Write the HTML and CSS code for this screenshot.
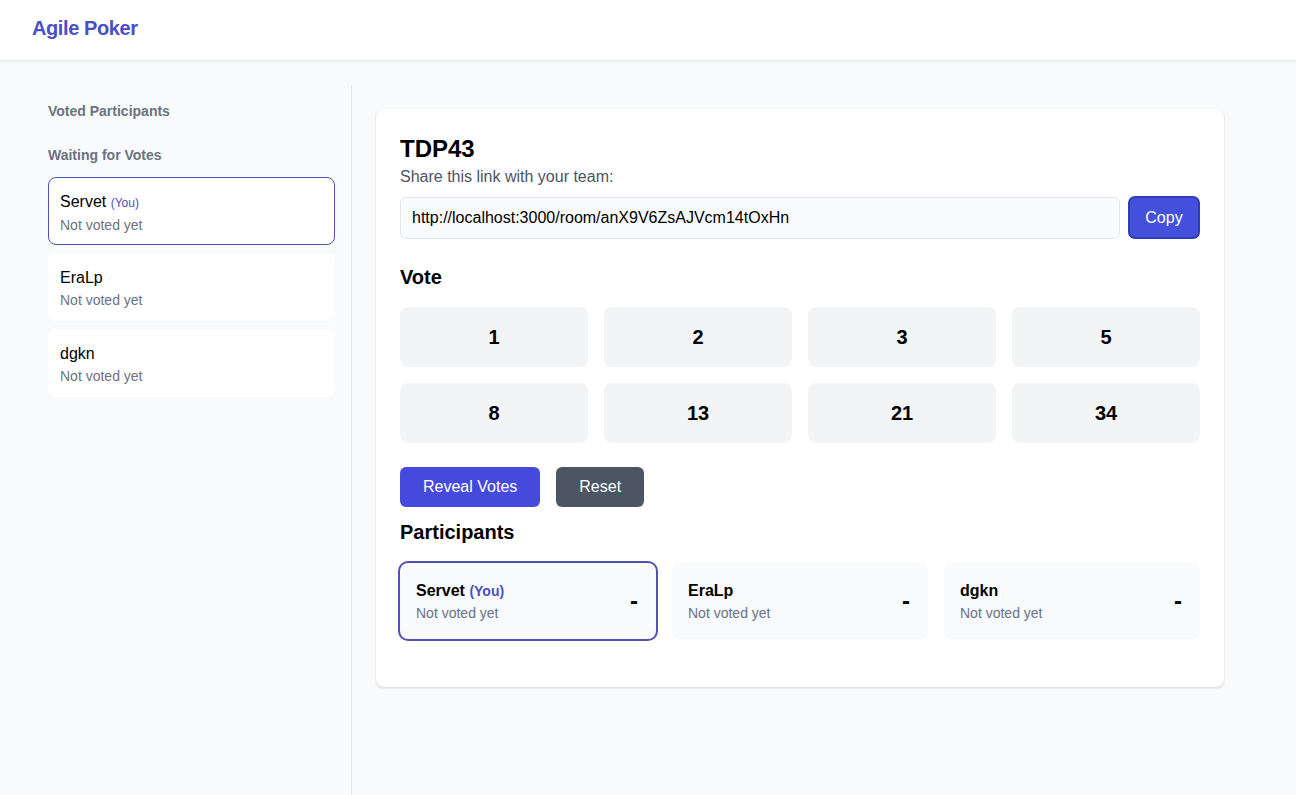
FILE: index.html
```html
<!DOCTYPE html>
<html lang="en">
<head>
<meta charset="utf-8">
<title>Agile Poker</title>
<link rel="stylesheet" href="styles.css">
</head>
<body>
<header class="topbar">
  <div class="logo">Agile Poker</div>
</header>
<div class="layout">
  <aside class="sidebar">
    <h3 class="side-title">Voted Participants</h3>
    <h3 class="side-title side-title-wait">Waiting for Votes</h3>
    <div class="side-list">
      <div class="side-card side-card-me">
        <div class="side-name">Servet <span class="you">(You)</span></div>
        <div class="side-status">Not voted yet</div>
      </div>
      <div class="side-card">
        <div class="side-name">EraLp</div>
        <div class="side-status">Not voted yet</div>
      </div>
      <div class="side-card">
        <div class="side-name">dgkn</div>
        <div class="side-status">Not voted yet</div>
      </div>
    </div>
  </aside>
  <main class="main">
    <section class="room-card">
      <h1 class="room-title">TDP43</h1>
      <p class="share-label">Share this link with your team:</p>
      <div class="share-row">
        <div class="share-input">http://localhost:3000/room/anX9V6ZsAJVcm14tOxHn</div>
        <button class="btn-copy">Copy</button>
      </div>
      <h2 class="section-title">Vote</h2>
      <div class="vote-grid">
        <button class="vote-btn">1</button>
        <button class="vote-btn">2</button>
        <button class="vote-btn">3</button>
        <button class="vote-btn">5</button>
        <button class="vote-btn">8</button>
        <button class="vote-btn">13</button>
        <button class="vote-btn">21</button>
        <button class="vote-btn">34</button>
      </div>
      <div class="actions">
        <button class="btn btn-reveal">Reveal Votes</button>
        <button class="btn btn-reset">Reset</button>
      </div>
      <h2 class="section-title participants-title">Participants</h2>
      <div class="part-grid">
        <div class="part-card part-card-me">
          <div class="part-info">
            <div class="part-name">Servet <span class="you-strong">(You)</span></div>
            <div class="part-status">Not voted yet</div>
          </div>
          <div class="part-vote">-</div>
        </div>
        <div class="part-card">
          <div class="part-info">
            <div class="part-name">EraLp</div>
            <div class="part-status">Not voted yet</div>
          </div>
          <div class="part-vote">-</div>
        </div>
        <div class="part-card">
          <div class="part-info">
            <div class="part-name">dgkn</div>
            <div class="part-status">Not voted yet</div>
          </div>
          <div class="part-vote">-</div>
        </div>
      </div>
    </section>
  </main>
</div>
</body>
</html>
```

FILE: styles.css
```css
* { box-sizing: border-box; }
html, body { margin: 0; padding: 0; }
body {
  font-family: "Liberation Sans", Arial, sans-serif;
  background: #f9fafb;
  color: #000000;
  min-height: 795px;
}
h1, h2, h3, p { margin: 0; }
button { font-family: inherit; border: none; cursor: pointer; }

.topbar {
  height: 61px;
  background: #ffffff;
  border-bottom: 1px solid #e5e7eb;
  box-shadow: 0 1px 2px rgba(0,0,0,0.04);
  display: flex;
  align-items: center;
  padding: 0 32px;
}
.logo {
  font-size: 20px;
  font-weight: 700;
  color: #4a4fc6;
  letter-spacing: -0.4px;
  margin-top: -3px;
}

.layout {
  display: flex;
  padding: 24px 32px 0 32px;
  min-height: 734px;
}
.sidebar {
  width: 320px;
  flex: none;
  padding: 16px;
  border-right: 1px solid #e5e7eb;
}
.side-title {
  font-size: 14px;
  line-height: 20px;
  font-weight: 700;
  color: #6b7280;
}
.side-title-wait { margin-top: 24px; }
.side-list {
  margin-top: 12px;
  display: flex;
  flex-direction: column;
  gap: 8px;
}
.side-card {
  background: #ffffff;
  border: 1px solid transparent;
  border-radius: 8px;
  padding: 12px 11px 10px 11px;
  height: 68px;
}
.side-card-me { border-color: #4f51b5; }
.side-name {
  font-size: 16px;
  line-height: 24px;
  color: #000000;
}
.you {
  font-size: 12px;
  color: #4a4fc6;
}
.side-status {
  font-size: 14px;
  line-height: 20px;
  color: #6b7280;
}

.main {
  flex: 1;
  padding: 24px;
}
.room-card {
  max-width: 848px;
  background: #ffffff;
  border-radius: 8px;
  box-shadow: 0 1px 3px rgba(0,0,0,0.1), 0 1px 2px rgba(0,0,0,0.06);
  padding: 24px 24px 48px 24px;
}
.room-title {
  font-size: 24px;
  line-height: 32px;
  font-weight: 700;
}
.share-label {
  font-size: 16px;
  line-height: 24px;
  color: #4b5563;
}
.share-row {
  margin-top: 8px;
  display: flex;
  gap: 8px;
}
.share-input {
  flex: 1;
  height: 42px;
  background: #f9fafb;
  border: 1px solid #e5e7eb;
  border-radius: 6px;
  padding: 0 11px;
  display: flex;
  align-items: center;
  font-size: 16px;
  color: #000000;
}
.btn-copy {
  width: 72px;
  height: 43px;
  margin-top: -1px;
  background: #4350dc;
  border: 2px solid #2e3eb8;
  border-radius: 7px;
  color: #ffffff;
  font-size: 16px;
}
.section-title {
  margin-top: 24px;
  font-size: 20px;
  line-height: 28px;
  font-weight: 700;
}
.vote-grid {
  margin-top: 16px;
  display: grid;
  grid-template-columns: repeat(4, 1fr);
  gap: 16px;
}
.vote-btn {
  height: 60px;
  background: #f3f4f6;
  border-radius: 8px;
  font-size: 20px;
  font-weight: 700;
  color: #000000;
}
.actions {
  margin-top: 24px;
  display: flex;
  gap: 16px;
}
.btn {
  height: 40px;
  padding: 0 23px;
  border-radius: 6px;
  color: #ffffff;
  font-size: 16px;
  font-weight: 400;
}
.btn-reveal { background: #4549dc; }
.btn-reset { background: #4b5563; }
.participants-title { margin-top: 11px; }
.part-grid {
  margin-top: 17px;
  display: grid;
  grid-template-columns: repeat(3, 1fr);
  gap: 16px;
}
.part-card {
  background: #f9fafb;
  border-radius: 8px;
  padding: 16px 16px;
  display: flex;
  align-items: center;
  justify-content: space-between;
}
.part-card-me {
  box-shadow: 0 0 0 2px #4f51b5;
}
.part-name {
  font-size: 16px;
  line-height: 24px;
  font-weight: 700;
}
.you-strong {
  font-size: 14px;
  color: #4a4fc6;
}
.part-status {
  font-size: 14px;
  line-height: 20px;
  color: #6b7280;
}
.part-vote {
  font-size: 24px;
  font-weight: 700;
  margin-right: 2px;
}
```
